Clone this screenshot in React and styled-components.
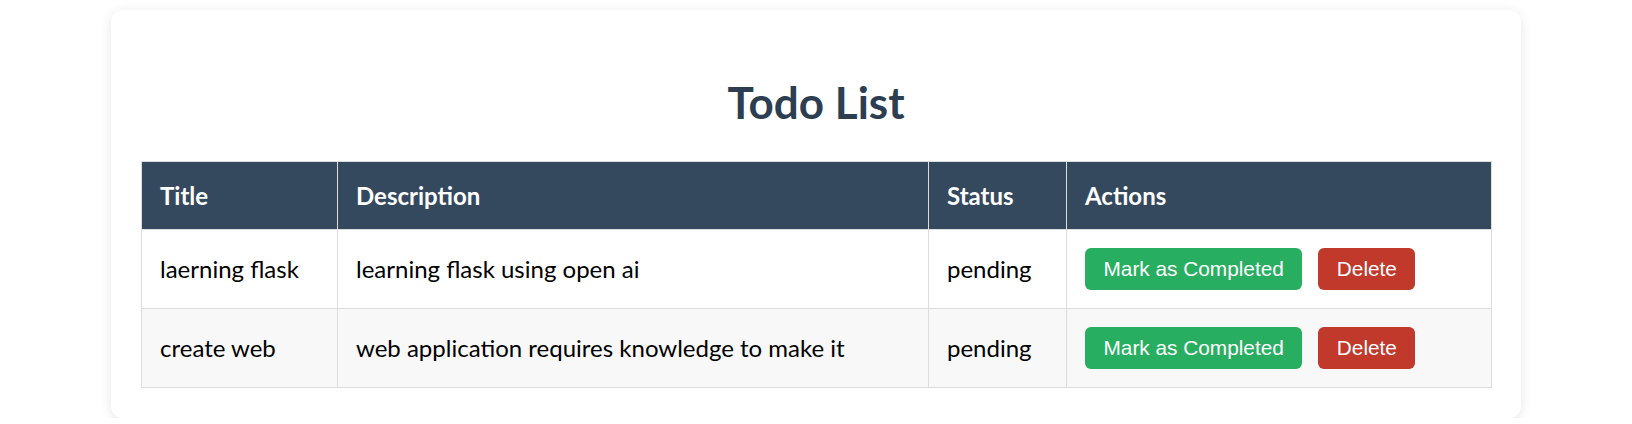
import React from 'react'
import styled, { createGlobalStyle } from 'styled-components'

const GlobalStyle = createGlobalStyle`
    html, body {
        margin: 0;
        padding: 0;
        background: #ffffff;
        font-family: Lato, "Open Sans", sans-serif;
    }
`

const todos = [
    { id: 1, title: 'laerning flask', description: 'learning flask using open ai', status: 'pending' },
    { id: 2, title: 'create web', description: 'web application requires knowledge to make it', status: 'pending' },
]

const columns = [
    { label: 'Title', width: 196 },
    { label: 'Description', width: 591 },
    { label: 'Status', width: 138 },
    { label: 'Actions', width: 425 },
]

export default function App() {
    return (
        <>
            <GlobalStyle />
            <Card>
                <Heading>Todo List</Heading>
                <Table>
                    <colgroup>
                        {columns.map(c => <col key={c.label} style={{ width: c.width }} />)}
                    </colgroup>
                    <thead>
                        <tr>
                            {columns.map(c => <Th key={c.label}>{c.label}</Th>)}
                        </tr>
                    </thead>
                    <tbody>
                        {todos.map(todo => (
                            <Row key={todo.id}>
                                <Td>{todo.title}</Td>
                                <Td>{todo.description}</Td>
                                <Td>{todo.status}</Td>
                                <Td>
                                    <Actions>
                                        <ActionButton variant="complete">Mark as Completed</ActionButton>
                                        <ActionButton variant="delete">Delete</ActionButton>
                                    </Actions>
                                </Td>
                            </Row>
                        ))}
                    </tbody>
                </Table>
            </Card>
        </>
    )
}

const Card = styled.div`
    box-sizing: border-box;
    width: 1410px;
    margin: 10px auto 0;
    padding: 30px;
    background: #ffffff;
    border-radius: 12px;
    box-shadow: 0 2px 12px rgba(0, 0, 0, 0.1);
`

const Heading = styled.h1`
    margin: 33px 0 30px;
    text-align: center;
    color: #2c3e50;
    font-size: 44px;
    line-height: 58px;
    font-weight: 700;
`

const Table = styled.table`
    width: 1350px;
    border-collapse: collapse;
    table-layout: fixed;
`

const Th = styled.th`
    background: #34495e;
    color: #ffffff;
    text-align: left;
    padding: 18px;
    font-size: 24px;
    line-height: 31px;
    font-weight: 700;
    border: 1px solid #dddddd;
`

const Row = styled.tr`
    &:nth-child(even) {
        background: #f8f8f8;
    }
`

const Td = styled.td`
    padding: 18px;
    font-size: 24px;
    line-height: 32px;
    color: #000000;
    border: 1px solid #dddddd;
    vertical-align: middle;
`

const Actions = styled.div`
    display: flex;
    gap: 16px;
`

const ActionButton = styled.button`
    height: 42px;
    padding: 0 18.5px;
    border: none;
    border-radius: 6px;
    color: #ffffff;
    font-family: "Liberation Sans", Arial, sans-serif;
    font-size: 20.8px;
    cursor: pointer;
    background: ${props => props.variant === 'delete' ? '#c0392b' : '#27ae60'};
`
